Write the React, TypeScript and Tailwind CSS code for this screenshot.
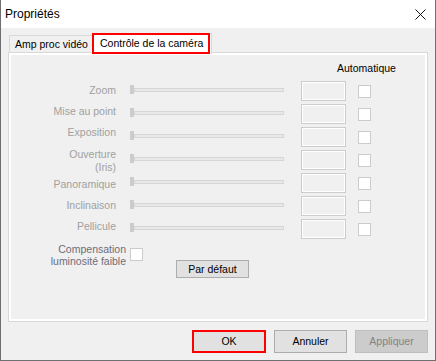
import React from "react";

const rows: { label: string[]; lt: string }[] = [
  { label: ["Zoom"], lt: "mt-[3px]" },
  { label: ["Mise au point"], lt: "mt-[1px]" },
  { label: ["Exposition"], lt: "-mt-[1px]" },
  { label: ["Ouverture", "(Iris)"], lt: "-mt-[2px]" },
  { label: ["Panoramique"], lt: "mt-[5px]" },
  { label: ["Inclinaison"], lt: "mt-[3px]" },
  { label: ["Pellicule"], lt: "mt-[1px]" },
];

export default function App() {
  return (
    <div
      className="w-[436px] h-[361px] bg-[#f0f0f0] border-l border-r border-b border-[#6f6f6f] flex flex-col text-black"
      style={{ fontFamily: "'Liberation Sans', Arial, sans-serif" }}
    >
      {/* Title bar */}
      <div className="h-[28px] bg-white flex items-center justify-between pl-[4px] pr-[9px] shrink-0">
        <span className="text-[12px] leading-[14px]">Propriétés</span>
        <svg width="11" height="11" viewBox="0 0 11 11" className="mt-[1px]">
          <path d="M0.5 0.5 L10.5 10.5 M10.5 0.5 L0.5 10.5" stroke="#111" strokeWidth="1" fill="none" />
        </svg>
      </div>

      {/* Tabs */}
      <div className="pt-[5px] pl-[8px] flex items-end h-[24px] shrink-0">
        <div className="h-[17px] bg-[#f0f0f0] border-l border-t border-[#d9d9d9] pl-[5px] pr-[4px] flex items-center text-[10.5px] leading-[13px]">
          Amp proc vidéo
        </div>
        <div className="relative z-10 -mb-[2px] h-[21px] w-[120px] bg-white border-r border-t border-[#d9d9d9] flex">
          <div className="w-[118px] h-[21px] border-2 border-[#ff0000] flex items-center pl-[6px] text-[10.5px] leading-[13px] -mt-[1px]">
            Contrôle de la caméra
          </div>
        </div>
      </div>

      {/* Panel */}
      <div className="ml-[7px] w-[420px] h-[270px] border border-[#d9d9d9] bg-white p-[2px] shrink-0">
        <div className="w-full h-full bg-[#f0f0f0] flex flex-col text-[10.5px] leading-[13px]">
          <div className="h-[26px] pt-[7px] pl-[326px] shrink-0">Automatique</div>
          {rows.map((r, i) => (
            <div key={i} className="h-[23px] flex items-start shrink-0">
              <div className={"w-[105px] text-right text-[#a0a0a0] leading-[13px] " + r.lt}>
                {r.label.map((l, j) => (
                  <div key={j}>{l}</div>
                ))}
              </div>
              <div className="ml-[14px] w-[154px] flex items-start">
                <div className="w-[4px] h-[9px] mt-[4px] bg-[#cccccc]" />
                <div className="flex-1 h-[4px] mt-[7px] border border-[#d6d6d6] bg-[#e8e8e8]" />
              </div>
              <div className="ml-[17px] w-[45px] h-[20px] border border-[#cccccc]">
                <div className="w-full h-full border border-white bg-[#f0f0f0]" />
              </div>
              <div className="ml-[12px] mt-[4px] w-[13px] h-[13px] border border-[#cccccc] bg-white" />
            </div>
          ))}
          <div className="flex items-start mt-[1px]">
            <div className="w-[115px] text-right text-[#6d6d78] leading-[12px]">
              <div>Compensation</div>
              <div>luminosité faible</div>
            </div>
            <div className="ml-[4px] mt-[5px] w-[13px] h-[13px] border border-[#cccccc] bg-white" />
            <div className="ml-[33px] mt-[17px] w-[73px] h-[18px] bg-[#e1e1e1] border border-[#adadad] flex items-center justify-center text-black">
              Par défaut
            </div>
          </div>
        </div>
      </div>

      {/* Buttons */}
      <div className="flex justify-end gap-[8px] pt-[8px] pr-[7px] text-[10.5px] leading-[13px]">
        <div className="w-[74px] h-[23px] border-2 border-[#ff0000] bg-[#e1e1e1] flex items-center justify-center">
          OK
        </div>
        <div className="w-[73px] h-[23px] border border-[#adadad] bg-[#e1e1e1] flex items-center justify-center">
          Annuler
        </div>
        <div className="w-[73px] h-[23px] border border-[#bfbfbf] bg-[#cccccc] flex items-center justify-center text-[#838383]">
          Appliquer
        </div>
      </div>
    </div>
  );
}
